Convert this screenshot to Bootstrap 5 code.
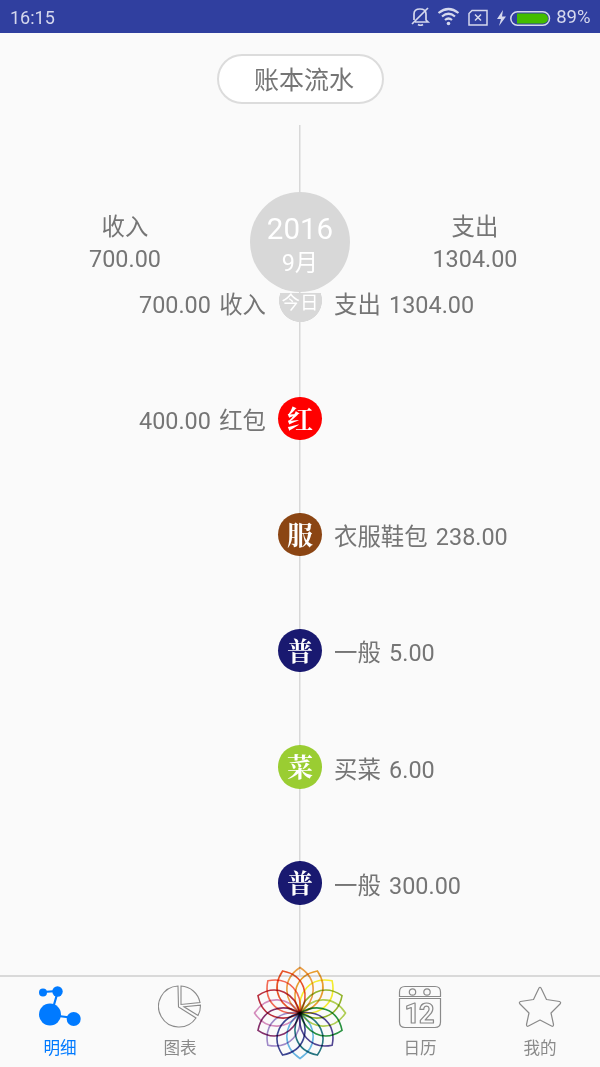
<!DOCTYPE html>
<html lang="zh-CN">
<head>
<meta charset="utf-8">
<meta name="viewport" content="width=device-width, initial-scale=1">
<title>账本流水</title>
<link href="https://cdn.jsdelivr.net/npm/bootstrap@5.3.0/dist/css/bootstrap.min.css" rel="stylesheet">
<style>
body{background:#fafafa;color:#757575;font-family:Roboto,"Noto Sans CJK SC",sans-serif;font-size:23.4px;line-height:31.500px}
.screen{height:1067px}
.status{height:33px;background:#303f9f;color:#d5d8ed;font-size:18px;padding:2px 10px 0}
.title-pill{width:167px;height:50px;margin-top:21px;padding:3px 0 0 8px;border:2px solid #dcdcdc!important;font-size:25px;background:#fff}
.timeline{margin-top:21px;padding-top:67px;background:linear-gradient(#d8d8d8,#d8d8d8) center/1.5px 100% no-repeat}
.month-row{display:grid;grid-template-columns:250px 100px 250px;height:101px}
.month{width:100px;height:100px;padding-top:6px;background:#d8d8d8;color:#fff}
.month .year{font-size:29.5px;line-height:36px}
.month .mon{padding-top:1px}
.entry{display:grid;grid-template-columns:266px 68px 266px;height:116.2px;align-items:start}
.entry .txt{line-height:44px;padding-top:3px;white-space:nowrap;word-spacing:2.5px}
.dot{width:43.5px;height:43.5px;margin-top:.5px;color:#fff;font-family:"Noto Serif CJK SC","Noto Sans CJK SC",serif;font-weight:700;font-size:26px;line-height:42px}
.today-row{height:103px}
.today-row .txt{line-height:24px;padding-top:0}
.today-dot{width:43px;height:29px;background:radial-gradient(circle at 50% 7.5px,#d8d8d8 21.2px,transparent 21.8px);color:#fff;font-size:18.5px;line-height:20px}
.tabs{height:92px;border-top:2px solid #d9d9d9;font-size:16.6px;line-height:20px;color:#8a8a8a}
.tab-item{width:120px;padding-top:8px}
.tab-item.active{color:#007aff}
.tab-item svg{width:44px;height:44px;margin-bottom:10px}
.tab-item .flower{width:96px;height:96px;margin:-20px 0 0}
.flower use{mix-blend-mode:multiply}
</style>
</head>
<body>
<div class="screen d-flex flex-column overflow-hidden">
<header class="status d-flex align-items-center justify-content-between flex-shrink-0">
<span>16:15</span>
<span class="d-flex align-items-center">
<svg class="flex-shrink-0" width="150" height="30" viewBox="0 1 150 30" fill="none" stroke="#d5d8ed" stroke-width="1.5">
<path d="M13 18V12Q13 7 19 7Q25 7 25 12V18L27 20H14M17 22.500Q19.500 24 22 22.500M11 22L27 6" stroke-width="1.700"/>
<path d="M37.500 11Q47.500 3 57.500 11M41 14.500Q47.500 9 54 14.500M44 18Q47.500 15 51 18" stroke-width="2.200"/><circle cx="47.500" cy="21.500" r="1.800" fill="#d5d8ed" stroke="none"/>
<path d="M71 8.500H86V23H68V11.500ZM74 12.500L80 18.500M80 12.500L74 18.500"/>
<path d="M102 8L96 17H100L98 24L105 14.500H101Z" fill="#d5d8ed" stroke="none"/>
<rect x="109.800" y="9.800" width="38.700" height="13.500" rx="6.700"/>
<path d="M116 11.500H142A5 5 0 0 1 142 21.600H116Z" fill="#43bd00" stroke="none"/>
</svg>
<span style="margin-left:5px;margin-right:-.5px;font-size:18.5px">89%</span>
</span>
</header>
<main class="flex-grow-1 d-flex flex-column">
<div class="title-pill border rounded-pill mx-auto d-flex align-items-center justify-content-center flex-shrink-0">账本流水</div>
<section class="timeline flex-grow-1">
<div class="month-row text-center">
<div class="pt-3 mt-1">收入<br>700.00</div>
<div class="month rounded-circle d-flex flex-column justify-content-center"><div class="year">2016</div><div class="mon">9月</div></div>
<div class="pt-3 mt-1">支出<br>1304.00</div>
</div>
<div class="entry today-row"><div class="txt text-end">700.00 收入</div><div class="today-dot mx-auto text-center">今日</div><div class="txt">支出 1304.00</div></div>
<div class="entry"><div class="txt text-end">400.00 红包</div><div class="dot rounded-circle mx-auto text-center" style="background:#f00">红</div><div></div></div>
<div class="entry"><div></div><div class="dot rounded-circle mx-auto text-center" style="background:#8b4513">服</div><div class="txt">衣服鞋包 238.00</div></div>
<div class="entry"><div></div><div class="dot rounded-circle mx-auto text-center" style="background:#191970">普</div><div class="txt">一般 5.00</div></div>
<div class="entry"><div></div><div class="dot rounded-circle mx-auto text-center" style="background:#9acd32">菜</div><div class="txt">买菜 6.00</div></div>
<div class="entry" style="height:92px"><div></div><div class="dot rounded-circle mx-auto text-center" style="background:#191970">普</div><div class="txt">一般 300.00</div></div>
</section>
</main>
<nav class="tabs d-flex flex-shrink-0 text-center">
<div class="tab-item active d-flex flex-column align-items-center">
<svg viewBox="0 0 44 44" fill="#007aff" stroke="#007aff"><path d="M5 7L20 6L13 30L36 33" fill="none" stroke-width="2.200"/><g stroke="none"><circle cx="5" cy="7.500" r="4"/><circle cx="19.500" cy="6.500" r="5.200"/><circle cx="12" cy="29.500" r="11"/><circle cx="35.700" cy="34" r="7"/></g></svg>明细</div>
<div class="tab-item d-flex flex-column align-items-center">
<svg viewBox="0 0 44 44" fill="none" stroke="#8a8a8a" stroke-width="1.100"><path d="M20 1A20.500 20.500 0 1 0 38 33L20.500 22ZM23 1V19.500L42 17.500A20.500 20.500 0 0 0 23 1ZM26 21.800L42.500 20.200Q42.500 26 40 30.500Z"/></svg>图表</div>
<div class="tab-item d-flex flex-column align-items-center">
<svg class="flower" viewBox="-48 -48 96 96" fill="none" stroke-width="1.600"><defs><path id="petal" d="M0 0C-16-12-19-33 0-45.500C19-33 16-12 0 0Z"/></defs>
<use href="#petal" stroke="#efa044"/>
<use href="#petal" stroke="#f8f030" transform="rotate(45)"/>
<use href="#petal" stroke="#b4d255" transform="rotate(90)"/>
<use href="#petal" stroke="#514594" transform="rotate(135)"/>
<use href="#petal" stroke="#69b8e6" transform="rotate(180)"/>
<use href="#petal" stroke="#a18bcb" transform="rotate(225)"/>
<use href="#petal" stroke="#d98fc0" transform="rotate(270)"/>
<use href="#petal" stroke="#f76b55" transform="rotate(315)"/>
<use href="#petal" stroke="#eda02f" transform="rotate(22.500)"/>
<use href="#petal" stroke="#96b82d" transform="rotate(67.500)"/>
<use href="#petal" stroke="#279440" transform="rotate(112.500)"/>
<use href="#petal" stroke="#277783" transform="rotate(157.500)"/>
<use href="#petal" stroke="#3d4594" transform="rotate(202.500)"/>
<use href="#petal" stroke="#87306d" transform="rotate(247.500)"/>
<use href="#petal" stroke="#bd2f3e" transform="rotate(292.500)"/>
<use href="#petal" stroke="#ec5529" transform="rotate(337.500)"/>
</svg></div>
<div class="tab-item d-flex flex-column align-items-center">
<svg viewBox="0 0 44 44" fill="none" stroke="#8a8a8a" stroke-width="1.200"><path d="M1.500 11.500V7Q1.500 1.500 7 1.500H37Q42.500 1.500 42.500 7V11.500ZM1.500 13.500H42.500V37Q42.500 42.500 37 42.500H7Q1.500 42.500 1.500 37Z"/><circle cx="14.500" cy="7" r="3.200"/><circle cx="29" cy="7" r="3.200"/><text x="21" y="37.500" text-anchor="middle" font-family="Roboto,sans-serif" font-weight="700" font-size="27" stroke-linejoin="round" letter-spacing="-1">12</text></svg>日历</div>
<div class="tab-item d-flex flex-column align-items-center">
<svg viewBox="0 0 44 44" fill="none" stroke="#8a8a8a" stroke-width="1.200" stroke-linejoin="round"><path d="M21 3Q22 1.500 23 3L28.500 14.500L41.500 16.500Q43.500 17.500 42 19L33 28L35.500 39.500Q35.500 42 33.500 41L22 35L10.500 41Q8.500 42 8.500 39.500L11 28L2 19Q0.500 17.500 2.500 16.500L15.500 14.500Z"/></svg>我的</div>
</nav>
</div>
<script src="https://cdn.jsdelivr.net/npm/bootstrap@5.3.0/dist/js/bootstrap.bundle.min.js"></script>
</body>
</html>
